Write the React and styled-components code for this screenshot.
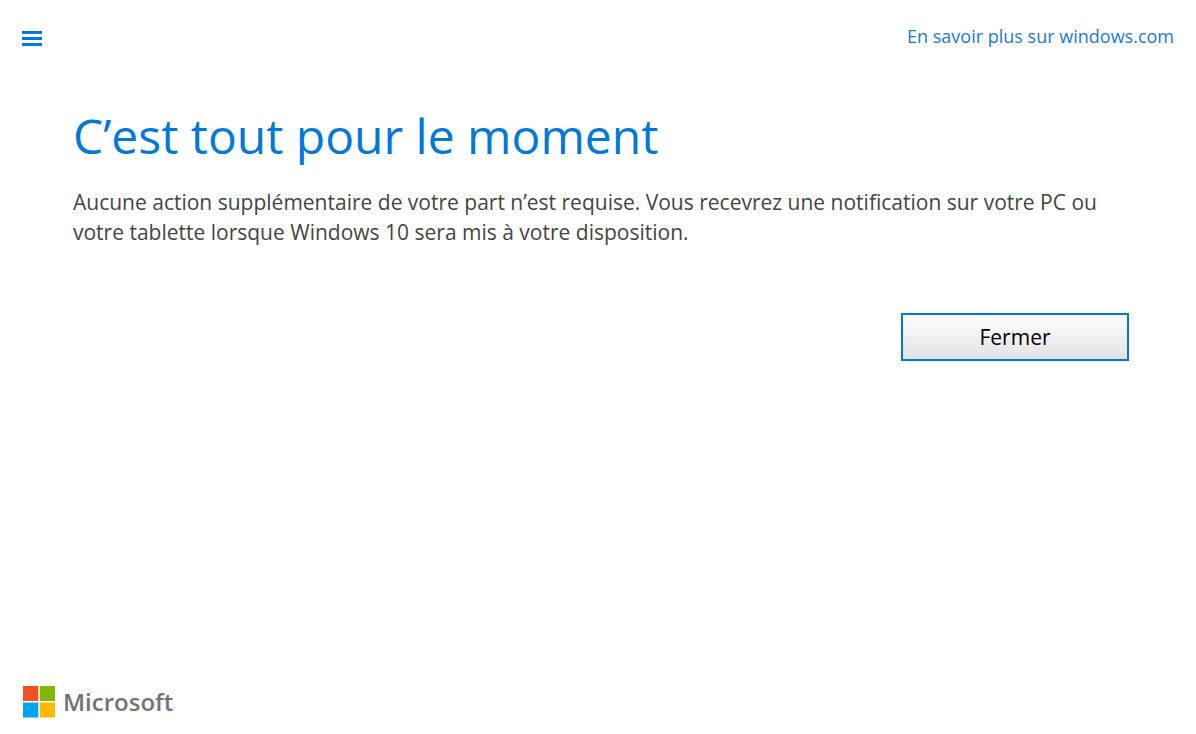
import styled, { createGlobalStyle } from 'styled-components';

const GlobalStyle = createGlobalStyle`
  * {
    box-sizing: border-box;
  }
  body {
    margin: 0;
    background: #fff;
    font-family: 'Open Sans', 'Noto Sans', sans-serif;
  }
`;

const Page = styled.div`
  display: flex;
  flex-direction: column;
  min-height: 100vh;
`;

const Header = styled.header`
  display: flex;
  justify-content: space-between;
  align-items: center;
  padding: 20px 22px 0;
`;

const MenuButton = styled.button`
  display: flex;
  padding: 4px 0 0;
  border: none;
  background: none;
  cursor: pointer;
`;

const MoreLink = styled.a`
  color: #1e78d2;
  font-size: 18px;
  line-height: 32px;
  text-decoration: none;
`;

const Main = styled.main`
  display: flex;
  flex: 1;
  flex-direction: column;
  padding: 48px 67px 0 73px;
`;

const Title = styled.h1`
  margin: 0;
  color: #0078d7;
  font-size: 48px;
  font-weight: 400;
  line-height: 71px;
`;

const Message = styled.p`
  margin: 16px 0 0;
  color: #444;
  font-size: 21px;
  line-height: 30px;
`;

const CloseButton = styled.button`
  align-self: flex-end;
  width: 228px;
  height: 48px;
  margin-top: 66px;
  padding: 0;
  border: 2px solid #0078d7;
  background: linear-gradient(#fff, #e2e2e2);
  color: #000;
  font-family: inherit;
  font-size: 21px;
  cursor: pointer;
`;

const Footer = styled.footer`
  display: flex;
  align-items: center;
  gap: 8px;
  padding: 0 23px 16px;
`;

const Brand = styled.span`
  color: #737373;
  font-size: 24px;
  font-weight: 600;
  line-height: 32px;
`;

function MenuIcon() {
  return (
    <svg width="20" height="15" viewBox="0 0 20 15" fill="#0078d7" aria-hidden="true">
      <rect width="20" height="3" />
      <rect y="6" width="20" height="3" />
      <rect y="12" width="20" height="3" />
    </svg>
  );
}

function Logo() {
  return (
    <svg width="32" height="32" viewBox="0 0 32 32" aria-hidden="true">
      <rect width="15.3" height="15" fill="#f25022" />
      <rect x="16.7" width="15.3" height="15" fill="#7fba00" />
      <rect y="16.5" width="15.3" height="15" fill="#00a4ef" />
      <rect x="16.7" y="16.5" width="15.3" height="15" fill="#ffb900" />
    </svg>
  );
}

export default function App() {
  return (
    <>
      <GlobalStyle />
      <Page>
        <Header>
          <MenuButton type="button" aria-label="Menu">
            <MenuIcon />
          </MenuButton>
          <MoreLink href="#">En savoir plus sur windows.com</MoreLink>
        </Header>
        <Main>
          <Title>C’est tout pour le moment</Title>
          <Message>
            Aucune action supplémentaire de votre part n’est requise. Vous
            recevrez une notification sur votre PC ou votre tablette lorsque
            Windows 10 sera mis à votre disposition.
          </Message>
          <CloseButton type="button">Fermer</CloseButton>
        </Main>
        <Footer>
          <Logo />
          <Brand>Microsoft</Brand>
        </Footer>
      </Page>
    </>
  );
}
